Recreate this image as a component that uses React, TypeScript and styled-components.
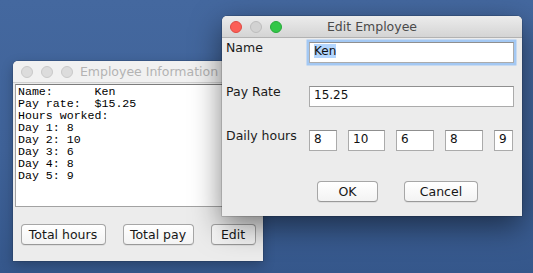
import React from "react";
import styled, { createGlobalStyle } from "styled-components";

const GlobalStyle = createGlobalStyle`
  html, body {
    margin: 0;
    padding: 0;
  }

  body {
    width: 533px;
    height: 273px;
    overflow: hidden;
    font-family: "DejaVu Sans", "Liberation Sans", sans-serif;
  }
`;

const Desktop = styled.div`
  position: relative;
  width: 533px;
  height: 273px;
  overflow: hidden;
  background: linear-gradient(180deg, #44689f 0%, #3f6298 55%, #35578b 100%);
`;

const Window = styled.div<{ $x: number; $y: number; $w: number; $h: number; $active?: boolean }>`
  position: absolute;
  left: ${(p) => p.$x}px;
  top: ${(p) => p.$y}px;
  width: ${(p) => p.$w}px;
  height: ${(p) => p.$h}px;
  display: flex;
  flex-direction: column;
  background: #ececec;
  border-radius: 5px 5px 0 0;
  box-shadow: ${(p) =>
    p.$active
      ? "0 0 0 0.5px rgba(0,0,0,0.25), 0 10px 30px rgba(0,0,0,0.5)"
      : "0 0 0 0.5px rgba(0,0,0,0.2), 0 4px 12px rgba(0,0,0,0.25)"};
`;

const TitleBar = styled.div<{ $active?: boolean }>`
  height: 22px;
  box-sizing: border-box;
  flex-shrink: 0;
  display: flex;
  align-items: center;
  border-radius: 5px 5px 0 0;
  border-bottom: 1px solid ${(p) => (p.$active ? "#b2b2b2" : "#cfcfcf")};
  background: ${(p) =>
    p.$active ? "linear-gradient(180deg, #ececec 0%, #d4d4d4 100%)" : "#f1f1f1"};
`;

const Lights = styled.div`
  width: 60px;
  flex-shrink: 0;
  display: flex;
  gap: 8px;
  padding-left: 8px;
  box-sizing: border-box;
`;

const Light = styled.span<{ $fill: string; $edge: string }>`
  width: 12px;
  height: 12px;
  box-sizing: border-box;
  border-radius: 50%;
  background: ${(p) => p.$fill};
  border: 1px solid ${(p) => p.$edge};
`;

const Title = styled.div<{ $active?: boolean }>`
  flex: 1;
  text-align: center;
  white-space: nowrap;
  overflow: hidden;
  font-size: 12.5px;
  line-height: 21px;
  color: ${(p) => (p.$active ? "#4a4a4a" : "#b3b3b3")};
`;

const TitleSpacer = styled.div<{ $w: number }>`
  width: ${(p) => p.$w}px;
  flex-shrink: 0;
`;

const TextArea = styled.pre`
  margin: 1px 2px 0;
  height: 123px;
  box-sizing: border-box;
  padding: 1px 2px;
  background: #fff;
  border: 1px solid #a2a2a2;
  border-top-color: #7c7c7c;
  font-family: "Liberation Mono", "DejaVu Sans Mono", monospace;
  font-size: 11.6px;
  line-height: 12px;
  color: #000;
  overflow: hidden;
`;

const ButtonBar = styled.div`
  flex: 1;
  display: flex;
  align-items: center;
  justify-content: center;
  gap: 17px;
`;

const PushButton = styled.button<{ $w: number }>`
  width: ${(p) => p.$w}px;
  height: 21px;
  box-sizing: border-box;
  padding: 0;
  border: 1px solid #a6a6a6;
  border-bottom-color: #999;
  border-radius: 4px;
  background: linear-gradient(180deg, #ffffff 0%, #f3f3f3 100%);
  box-shadow: 0 1px 0 rgba(0, 0, 0, 0.06);
  font-family: "DejaVu Sans", sans-serif;
  font-size: 12.5px;
  line-height: 19px;
  color: #161616;
`;

const Form = styled.div`
  display: flex;
  flex-direction: column;
  gap: 23px;
  padding: 4px 8px 0 4px;
`;

const Row = styled.div`
  display: flex;
  align-items: flex-start;
`;

const Label = styled.div`
  width: 83px;
  flex-shrink: 0;
  font-size: 12.5px;
  line-height: 11px;
  color: #1b1b1b;
  white-space: nowrap;
`;

const Field = styled.div<{ $w?: number; $focused?: boolean }>`
  ${(p) => (p.$w ? `width: ${p.$w}px;` : "flex: 1;")}
  height: 21px;
  box-sizing: border-box;
  padding: 0 4px 2px;
  background: #fff;
  border: 1px solid #ababab;
  border-top-color: #8f8f8f;
  font-size: 12px;
  line-height: 17px;
  color: #111;
  white-space: nowrap;
  overflow: hidden;
  box-shadow: ${(p) => (p.$focused ? "0 0 0 2.5px #a3c8f3" : "none")};
`;

const Selected = styled.span`
  background: #b3d5fd;
`;

const HoursRow = styled.div`
  flex: 1;
  display: flex;
  gap: 11px;
`;

const DialogButtons = styled.div`
  display: flex;
  gap: 26px;
  padding-left: 95px;
  margin-top: 30px;
`;

const hours = [
  { value: "8", width: 28 },
  { value: "10", width: 37 },
  { value: "6", width: 38 },
  { value: "8", width: 38 },
  { value: "9", width: 19 },
];

const info = `Name:      Ken
Pay rate:  $15.25
Hours worked:
Day 1: 8
Day 2: 10
Day 3: 6
Day 4: 8
Day 5: 9`;

const TrafficLights = ({ active }: { active?: boolean }) => (
  <Lights>
    {active ? (
      <>
        <Light $fill="#fc5f57" $edge="#de4a43" />
        <Light $fill="#d2d2d2" $edge="#bdbdbd" />
        <Light $fill="#33c748" $edge="#27a93a" />
      </>
    ) : (
      <>
        <Light $fill="#dcdcdc" $edge="#c9c9c9" />
        <Light $fill="#dcdcdc" $edge="#c9c9c9" />
        <Light $fill="#dcdcdc" $edge="#c9c9c9" />
      </>
    )}
  </Lights>
);

export default function App() {
  return (
    <>
      <GlobalStyle />
      <Desktop>
        <Window $x={13} $y={61} $w={250} $h={200}>
          <TitleBar>
            <TrafficLights />
            <Title>Employee Information</Title>
            <TitleSpacer $w={38} />
          </TitleBar>
          <TextArea>{info}</TextArea>
          <ButtonBar>
            <PushButton $w={85}>Total hours</PushButton>
            <PushButton $w={71}>Total pay</PushButton>
            <PushButton $w={45}>Edit</PushButton>
          </ButtonBar>
        </Window>

        <Window $x={222} $y={16} $w={300} $h={200} $active>
          <TitleBar $active>
            <TrafficLights active />
            <Title $active>Edit Employee</Title>
            <TitleSpacer $w={60} />
          </TitleBar>
          <Form>
            <Row>
              <Label>Name</Label>
              <Field $focused>
                <Selected>Ken</Selected>
              </Field>
            </Row>
            <Row>
              <Label>Pay Rate</Label>
              <Field>15.25</Field>
            </Row>
            <Row>
              <Label>Daily hours</Label>
              <HoursRow>
                {hours.map((h, i) => (
                  <Field key={i} $w={h.width}>
                    {h.value}
                  </Field>
                ))}
              </HoursRow>
            </Row>
          </Form>
          <DialogButtons>
            <PushButton $w={61}>OK</PushButton>
            <PushButton $w={74}>Cancel</PushButton>
          </DialogButtons>
        </Window>
      </Desktop>
    </>
  );
}
